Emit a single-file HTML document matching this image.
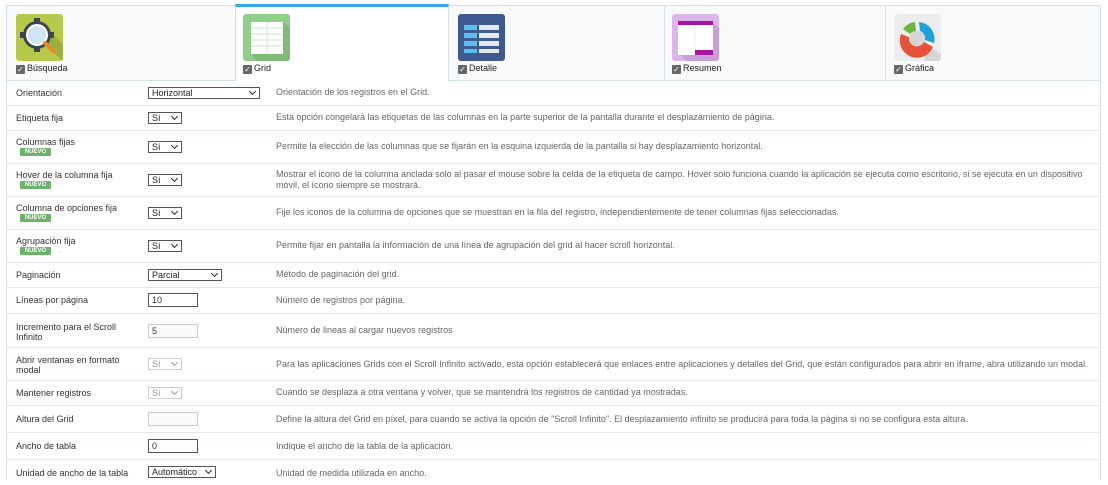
<!DOCTYPE html>
<html><head><meta charset="utf-8">
<style>
*{box-sizing:border-box;margin:0;padding:0}
body{width:1108px;height:480px;overflow:hidden;background:#fff;font-family:"Liberation Sans",Arial,sans-serif;font-size:9px;color:#333;position:relative}
.tabs{position:absolute;left:6px;top:5px;width:1095px;height:76px;background:#f7f9fa;border:1px solid #d6dfe6}
.tab{position:absolute;top:0;height:75px;border-right:1px solid #d6dfe6}
.tab.act{background:#fff;top:-2px;height:78px;border-top:3px solid #3aa7ea;border-left:1px solid #d6dfe6;border-bottom:none}
.ico{position:absolute;width:47px;height:47px;border-radius:3px;overflow:hidden}
.lab{position:absolute;font-size:9px;color:#222;white-space:nowrap}
.cb{display:inline-block;width:9px;height:9px;background:#666;color:#fff;font-size:8px;line-height:9px;text-align:center;vertical-align:-1px;margin-right:2px;border-radius:1px}
.frame{position:absolute;left:6px;top:80px;width:1095px;height:400px;border-left:1px solid #d6dfe6;border-right:1px solid #d6dfe6}
.row{position:absolute;left:7px;width:1093px;border-bottom:1px solid #e3e9ee}
.l{position:absolute;left:9px;color:#333;line-height:10px}
.d{position:absolute;left:269px;color:#666;line-height:11px;width:820px}
.sel{position:absolute;left:141px;height:12px;border:1px solid #555;background:#fff;font-size:9px;line-height:10px;padding-left:3px;color:#222}
.sel:after{content:"";position:absolute;right:4px;top:1px;width:4px;height:4px;border-right:1.5px solid #222;border-bottom:1.5px solid #222;transform:rotate(45deg)}
.sel.dis{border-color:#ccc;color:#999}
.sel.dis:after{border-color:#999}
.inp{position:absolute;left:141px;width:50px;height:14px;border:1px solid #555;font-size:9px;line-height:12px;padding-left:3px;background:#fff}
.inp.dis{border-color:#ccc;background:#fafafa}
.nv{position:absolute;left:13px;width:31px;height:8px;background:#6bb36a;color:#fff;font-size:6px;font-weight:bold;line-height:8px;text-align:center;border-radius:1px}
</style></head><body>
<div class="tabs">
 <div class="tab" style="left:0;width:229px"></div>
 <div class="tab act" style="left:228px;width:214px"></div>
 <div class="tab" style="left:442px;width:216px"></div>
 <div class="tab" style="left:658px;width:221px"></div>
</div>
<div class="ico" style="left:16px;top:14px;background:#b7c94a">
<svg width="47" height="47"><polygon points="20,22 47,47 47,30 30,14" fill="#9cae3c"/><circle cx="21" cy="21" r="14" fill="#3c4650"/><g fill="#3c4650"><rect x="18" y="4" width="6" height="6"/><rect x="18" y="32" width="6" height="6"/><rect x="4" y="18" width="6" height="6"/><rect x="32" y="18" width="6" height="6"/></g><circle cx="21" cy="21" r="10" fill="#cfe6f2" stroke="#fff" stroke-width="2"/><line x1="29" y1="29" x2="38" y2="38" stroke="#e98a2c" stroke-width="4" stroke-linecap="round"/></svg></div>
<div class="lab" style="left:16px;top:63px"><span class="cb">✓</span>Búsqueda</div>
<div class="ico" style="left:243px;top:14px;background:#8fcf8a">
<svg width="47" height="47"><polygon points="40,8 47,14 47,47 14,47 8,40" fill="#7dbb76"/><rect x="8" y="8" width="32" height="32" fill="#fff"/><g stroke="#cfe5cc" stroke-width="1"><line x1="24" y1="8" x2="24" y2="40"/><line x1="8" y1="14" x2="40" y2="14"/><line x1="8" y1="20" x2="40" y2="20"/><line x1="8" y1="26" x2="40" y2="26"/><line x1="8" y1="32" x2="40" y2="32"/></g></svg></div>
<div class="lab" style="left:243px;top:63px"><span class="cb">✓</span>Grid</div>
<div class="ico" style="left:458px;top:14px;background:#3e5a8f">
<svg width="47" height="47"><g fill="#56c0ee"><rect x="6" y="11" width="13" height="5"/><rect x="6" y="19" width="13" height="5"/><rect x="6" y="27" width="13" height="5"/><rect x="6" y="35" width="13" height="4"/></g><g fill="#e3e6ea"><rect x="21" y="11" width="20" height="5"/><rect x="21" y="19" width="20" height="5"/><rect x="21" y="27" width="20" height="5"/><rect x="21" y="35" width="20" height="4"/></g></svg></div>
<div class="lab" style="left:458px;top:63px"><span class="cb">✓</span>Detalle</div>
<div class="ico" style="left:672px;top:14px;background:#dcb5ea">
<svg width="47" height="47"><polygon points="40,8 47,14 47,47 14,47 8,40" fill="#c89fd8"/><rect x="6" y="7" width="35" height="34" fill="#fff"/><rect x="6" y="7" width="35" height="4" fill="#a5179f"/><rect x="23" y="36" width="18" height="5" fill="#a5179f"/><line x1="23" y1="11" x2="23" y2="36" stroke="#eee"/></svg></div>
<div class="lab" style="left:672px;top:63px"><span class="cb">✓</span>Resumen</div>
<div class="ico" style="left:894px;top:14px;background:#ececec">
<svg width="47" height="47"><polygon points="30,30 47,40 47,47 30,47" fill="#d6d6d6"/><circle cx="23" cy="25" r="8" fill="#d5d5d5"/><path d="M7 20 A17 17 0 0 0 39 33 L30 28 A8 8 0 0 1 15 23 Z" fill="#e5533b"/><path d="M9 15 A17 17 0 0 1 21 8 L22 17 A8 8 0 0 0 16 20 Z" fill="#6db33f"/><path d="M25 8 A17 17 0 0 1 40 29 L31 26 A8 8 0 0 0 26 17 Z" fill="#1ba1dc"/></svg></div>
<div class="lab" style="left:894px;top:63px"><span class="cb">✓</span>Gráfica</div>

<div class="frame"></div>
<div class="row" style="top:80px;height:26px"><div class="l" style="top:8px">Orientación</div><div class="sel" style="top:7px;width:112px">Horizontal</div><div class="d" style="top:7px">Orientación de los registros en el Grid.</div></div>
<div class="row" style="top:106px;height:25px"><div class="l" style="top:7px">Etiqueta fija</div><div class="sel" style="top:6px;width:34px">Sí</div><div class="d" style="top:6px">Esta opción congelará las etiquetas de las columnas en la parte superior de la pantalla durante el desplazamiento de página.</div></div>
<div class="row" style="top:131px;height:33px"><div class="l" style="top:6px">Columnas fijas</div><div class="nv" style="top:17px">NUEVO</div><div class="sel" style="top:10px;width:34px">Sí</div><div class="d" style="top:10px">Permite la elección de las columnas que se fijarán en la esquina izquierda de la pantalla si hay desplazamiento horizontal.</div></div>
<div class="row" style="top:164px;height:33px"><div class="l" style="top:6px">Hover de la columna fija</div><div class="nv" style="top:17px">NUEVO</div><div class="sel" style="top:10px;width:34px">Sí</div><div class="d" style="top:5px">Mostrar el icono de la columna anclada solo al pasar el mouse sobre la celda de la etiqueta de campo. Hover solo funciona cuando la aplicación se ejecuta como escritorio, si se ejecuta en un dispositivo móvil, el ícono siempre se mostrará.</div></div>
<div class="row" style="top:197px;height:33px"><div class="l" style="top:6px">Columna de opciones fija</div><div class="nv" style="top:17px">NUEVO</div><div class="sel" style="top:10px;width:34px">Sí</div><div class="d" style="top:10px">Fije los iconos de la columna de opciones que se muestran en la fila del registro, independientemente de tener columnas fijas seleccionadas.</div></div>
<div class="row" style="top:230px;height:33px"><div class="l" style="top:6px">Agrupación fija</div><div class="nv" style="top:17px">NUEVO</div><div class="sel" style="top:10px;width:34px">Sí</div><div class="d" style="top:10px">Permite fijar en pantalla la información de una línea de agrupación del grid al hacer scroll horizontal.</div></div>
<div class="row" style="top:263px;height:25px"><div class="l" style="top:7px">Paginación</div><div class="sel" style="top:6px;width:74px">Parcial</div><div class="d" style="top:6px">Método de paginación del grid.</div></div>
<div class="row" style="top:288px;height:26px"><div class="l" style="top:7px">Líneas por página</div><div class="inp" style="top:5px">10</div><div class="d" style="top:7px">Número de registros por página.</div></div>
<div class="row" style="top:314px;height:34px"><div class="l" style="top:8px">Incremento para el Scroll<br>Infinito</div><div class="inp dis" style="top:10px">5</div><div class="d" style="top:11px">Número de lineas al cargar nuevos registros</div></div>
<div class="row" style="top:348px;height:33px"><div class="l" style="top:7px">Abrir ventanas en formato<br>modal</div><div class="sel dis" style="top:10px;width:34px">Sí</div><div class="d" style="top:11px">Para las aplicaciones Grids con el Scroll Infinito activado, esta opción establecerá que enlaces entre aplicaciones y detalles del Grid, que están configurados para abrir en iframe, abra utilizando un modal.</div></div>
<div class="row" style="top:381px;height:25px"><div class="l" style="top:7px">Mantener registros</div><div class="sel dis" style="top:6px;width:34px">Sí</div><div class="d" style="top:6px">Cuando se desplaza a otra ventana y volver, que se mantendrá los registros de cantidad ya mostradas.</div></div>
<div class="row" style="top:406px;height:27px"><div class="l" style="top:8px">Altura del Grid</div><div class="inp dis" style="top:6px"></div><div class="d" style="top:8px">Define la altura del Grid en píxel, para cuando se activa la opción de "Scroll Infinito". El desplazamiento infinito se producirá para toda la página si no se configura esta altura.</div></div>
<div class="row" style="top:433px;height:27px"><div class="l" style="top:8px">Ancho de tabla</div><div class="inp" style="top:6px">0</div><div class="d" style="top:8px">Indique el ancho de la tabla de la aplicación.</div></div>
<div class="row" style="top:460px;height:25px;border:none"><div class="l" style="top:8px">Unidad de ancho de la tabla</div><div class="sel" style="top:6px;width:68px">Automático</div><div class="d" style="top:8px">Unidad de medida utilizada en ancho.</div></div>
</body></html>
